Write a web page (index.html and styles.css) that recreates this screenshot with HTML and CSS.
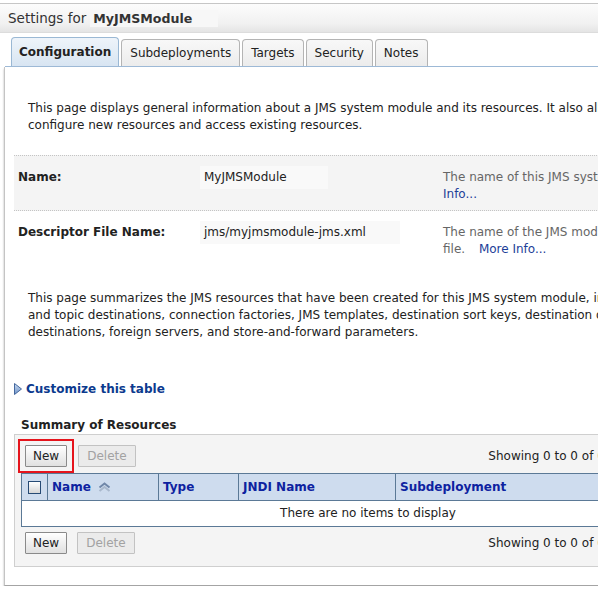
FILE: index.html
```html
<!DOCTYPE html>
<html lang="en">
<head>
  <meta charset="UTF-8" />
  <meta name="viewport" content="width=device-width, initial-scale=1.0"/>
  <title>Settings for MyJMSModule</title>
  <link rel="stylesheet" href="styles.css">
</head>
<body>
  <div class="title-bar">
    <span>Settings for</span>
    <span class="title-name">MyJMSModule</span>
  </div>

  <div class="tabs">
    <div class="tab active">Configuration</div>
    <div class="tab">Subdeployments</div>
    <div class="tab">Targets</div>
    <div class="tab">Security</div>
    <div class="tab">Notes</div>
  </div>

  <div class="panel">
    <p class="intro">This page displays general information about a JMS system module and its resources. It also allows you to<br>configure new resources and access existing resources.</p>

    <!-- general settings -->
    <div class="field-row shaded">
      <div class="field-label">Name:</div>
      <div class="field-value"><div class="value-box short">MyJMSModule</div></div>
      <div class="field-help">The name of this JMS system module. <a class="more" href="#">More<br>Info...</a></div>
    </div>
    <div class="field-row">
      <div class="field-label">Descriptor File Name:</div>
      <div class="field-value"><div class="value-box long">jms/myjmsmodule-jms.xml</div></div>
      <div class="field-help">The name of the JMS module descriptor<br>file. <a class="more spaced" href="#">More Info...</a></div>
    </div>

    <p class="summary-text">This page summarizes the JMS resources that have been created for this JMS system module, including queue<br>and topic destinations, connection factories, JMS templates, destination sort keys, destination quota, distributed<br>destinations, foreign servers, and store-and-forward parameters.</p>

    <a class="customize" href="#">
      <svg width="8" height="12" viewBox="0 0 8 12">
        <defs>
          <linearGradient id="tri" x1="0" y1="0" x2="0" y2="1">
            <stop offset="0" stop-color="#c9daf0"/>
            <stop offset="1" stop-color="#6d92c8"/>
          </linearGradient>
        </defs>
        <path d="M0.5 0.5 L7.5 6 L0.5 11.5 Z" fill="url(#tri)" stroke="#44679d"/>
      </svg>
      Customize this table
    </a>

    <h2 class="table-title">Summary of Resources</h2>

    <!-- resources table -->
    <div class="resources">
      <div class="toolbar top">
        <div class="highlight"><button class="btn">New</button></div>
        <button class="btn disabled">Delete</button>
        <div class="pager">Showing 0 to 0 of 0 <span class="pager-nav">Previous | Next</span></div>
      </div>

      <table class="grid">
        <thead>
          <tr>
            <th class="col-check"><span class="checkbox"></span></th>
            <th class="col-name">Name
              <svg class="sort-icon" width="13" height="10" viewBox="0 0 13 10">
                <path d="M1.5 5.5 L6.5 1.5 L11.5 5.5" fill="none" stroke="#7087a8" stroke-width="2"/>
                <path d="M1.5 9 L6.5 5 L11.5 9" fill="none" stroke="#a9b8cc" stroke-width="2"/>
              </svg>
            </th>
            <th class="col-type">Type</th>
            <th class="col-jndi">JNDI Name</th>
            <th class="col-sub">Subdeployment</th>
            <th>Targets</th>
          </tr>
        </thead>
        <tbody>
          <tr>
            <td colspan="6" class="empty">There are no items to display</td>
          </tr>
        </tbody>
      </table>

      <div class="toolbar bottom">
        <button class="btn">New</button>
        <button class="btn disabled">Delete</button>
        <div class="pager">Showing 0 to 0 of 0 <span class="pager-nav">Previous | Next</span></div>
      </div>
    </div>
  </div>
</body>
</html>
```

FILE: styles.css
```css
body {
  margin: 0;
  overflow: hidden;
  background-color: white;
  color: #222;
  font-family: "DejaVu Sans", Verdana, sans-serif;
  font-size: 12px;
}

.title-bar {
  margin-top: 3px;
  height: 28px;
  padding-left: 8px;
  display: flex;
  align-items: center;
  border-top: 1px solid #c6c6c6;
  border-bottom: 1px solid #dcdcdc;
  background: linear-gradient(#fcfcfc, #f1f1f1 70%, #e4e4e4);
  font-size: 13.5px;
  color: #333;
  white-space: nowrap;
}

.title-name {
  margin-left: 4px;
  padding: 1px 26px 1px 3px;
  background-color: #f7f7f7;
  font-weight: bold;
  font-size: 12.6px;
}

.tabs {
  display: flex;
  align-items: flex-end;
  gap: 2px;
  margin: 4px 0 0 5px;
  padding-left: 6px;
  border-bottom: 1px solid #9db9d6;
}

.tab {
  height: 26px;
  line-height: 27px;
  padding: 0 8px;
  border: 1px solid #b4b4b4;
  border-bottom: none;
  border-radius: 4px 4px 0 0;
  background: linear-gradient(#f8f8f8, #ececec);
  color: #222;
  white-space: nowrap;
}

.tab.active {
  height: 28px;
  line-height: 29px;
  padding: 0 7px;
  font-weight: bold;
  border-color: #9ab8d4;
  background: linear-gradient(#eef4fa, #d8e5f2);
}

.panel {
  width: 820px;
  margin-left: 4px;
  padding: 33px 0 18px 0;
  border-left: 1px solid #c4c4c4;
  border-bottom: 1px solid #a4a4a4;
  box-shadow: 0 2px 2px rgba(0, 0, 0, 0.3);
  white-space: nowrap;
  line-height: 17px;
}

.intro,
.summary-text {
  margin: 0;
  padding-left: 23px;
}

.intro {
  margin-bottom: 21px;
}

.summary-text {
  margin-top: 25px;
}

.field-row {
  display: grid;
  grid-template-columns: 182px 243px auto;
  margin-left: 9px;
  padding: 13px 0 7px 4px;
}

.field-row.shaded {
  background-color: #f4f4f4;
  border-top: 1px dotted #c4c4c4;
  border-bottom: 1px dotted #c4c4c4;
}

.field-label {
  font-weight: bold;
}

.value-box {
  margin-top: -3px;
  padding: 3px 4px;
  background-color: #f9f9f9;
}

.value-box.short { width: 120px; }
.value-box.long { width: 192px; }

.field-help {
  color: #666;
}

.more {
  color: #1c3e98;
  text-decoration: none;
}

.more.spaced {
  margin-left: 10px;
}

.customize {
  display: flex;
  align-items: center;
  gap: 4px;
  margin: 39px 0 0 9px;
  line-height: 18px;
  font-weight: bold;
  color: #0c3a8e;
  text-decoration: none;
}

.table-title {
  margin: 18px 0 0 0;
  padding-left: 16px;
  font-size: 12px;
  line-height: 18px;
  color: #222;
}

.resources {
  width: 706px;
  margin-left: 9px;
  padding: 4px 0 12px 0;
  border: 1px solid #cfcfcf;
  background-color: #f4f4f4;
}

.toolbar {
  display: flex;
  align-items: center;
}

.toolbar.top {
  padding-left: 3px;
}

.toolbar.bottom {
  margin-top: 5px;
  padding-left: 10px;
  gap: 10px;
}

.highlight {
  padding: 4px 5px 4px 5px;
  border: 2px solid #e5141c;
  margin-right: 4px;
}

.btn {
  height: 22px;
  box-sizing: border-box;
  padding: 0 7px;
  border: 1px solid #8a8a8a;
  border-radius: 1px;
  background: linear-gradient(#ffffff, #e0e0e0);
  font-family: "DejaVu Sans", Verdana, sans-serif;
  font-size: 12px;
  color: #222;
}

.btn.disabled {
  padding: 0 8px;
  border-color: #c2c2c2;
  background: #ebebeb;
  color: #a2a2a2;
}

.pager {
  margin-left: auto;
  padding-right: 10px;
  color: #222;
}

.pager-nav {
  margin-left: 12px;
  color: #a0a0a0;
}

.grid {
  width: 694px;
  margin: 0 6px;
  border-collapse: collapse;
  border: 1px solid #5b7996;
}

.grid th {
  height: 26px;
  padding: 0 4px;
  border: 1px solid #5b7996;
  background-color: #cedcee;
  text-align: left;
  font-weight: bold;
  color: #0d22a0;
  white-space: nowrap;
}

.grid .col-check { width: 14px; padding: 0 5px 0 6px; }
.grid .col-name { width: 102px; }
.grid .col-type { width: 71px; }
.grid .col-jndi { width: 148px; }
.grid .col-sub { width: 201px; }

.checkbox {
  display: block;
  width: 11px;
  height: 11px;
  border: 1px solid #264a74;
  background: linear-gradient(#ffffff, #d6d6d6);
}

.sort-icon {
  margin-left: 3px;
  vertical-align: -1px;
}

.grid td.empty {
  height: 25px;
  padding: 0;
  background-color: white;
  text-align: center;
  color: #222;
}
```
